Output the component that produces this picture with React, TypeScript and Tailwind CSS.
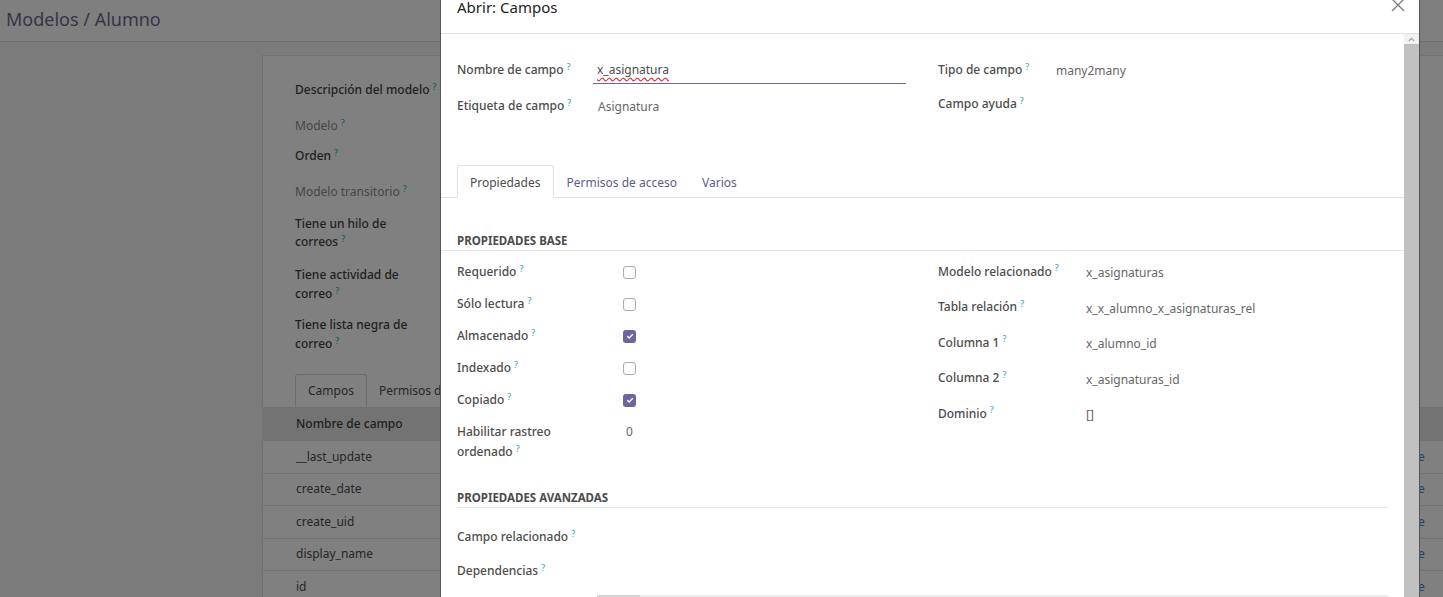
import React from "react";

const font = { fontFamily: '"Noto Sans", "Open Sans", Arial, sans-serif' };

function Q({ dim }: { dim?: boolean }) {
  return (
    <sup className={`ml-[3px] text-[9px] font-normal ${dim ? "text-[#0f5561]" : "text-[#1ea1b8]"}`}>?</sup>
  );
}

function Check({ on }: { on?: boolean }) {
  if (on) {
    return (
      <span className="flex h-[13px] w-[13px] items-center justify-center rounded-[3px] bg-[#71639e]">
        <svg width="8" height="8" viewBox="0 0 8 8">
          <path d="M1.3 4.2 L3.2 6 L6.8 2.2" stroke="white" strokeWidth="1.5" fill="none" />
        </svg>
      </span>
    );
  }
  return <span className="block h-[13px] w-[13px] rounded-[3px] border border-[#adadad] bg-white" />;
}

const bgRows = ["__last_update", "create_date", "create_uid", "display_name", "id"];

function Background() {
  return (
    <div className="absolute inset-0 flex flex-col bg-[#7b7b7b] text-[12px]">
      <div className="flex h-[42px] shrink-0 items-center border-b border-[#6e6e6e] bg-[#7f7f7f] pb-[3px] pl-[6px]">
        <span className="text-[18px] text-[#353545]">Modelos / Alumno</span>
      </div>
      <div className="ml-[262px] mt-[13px] flex-1 overflow-hidden border-l border-t border-[#727272] bg-[#808080]">
        <div className="flex flex-col pl-[32px] leading-[18px] text-[#1e1e1e]">
          <div className="mt-[25px] font-medium">Descripción del modelo<Q dim /></div>
          <div className="mt-[18px] text-[#464646]">Modelo<Q dim /></div>
          <div className="mt-[12px] font-medium">Orden<Q dim /></div>
          <div className="mt-[18px] text-[#464646]">Modelo transitorio<Q dim /></div>
          <div className="mt-[14px] font-medium leading-[18px]">Tiene un hilo de<br />correos<Q dim /></div>
          <div className="mt-[14px] font-medium leading-[19px]">Tiene actividad de<br />correo<Q dim /></div>
          <div className="mt-[12px] font-medium leading-[19px]">Tiene lista negra de<br />correo<Q dim /></div>
        </div>
        <div className="mt-[21px] flex px-[32px] text-[#262626]">
          <div className="flex h-[33px] items-center rounded-t-[3px] border border-b-0 border-[#6c6c6c] px-[12px]">Campos</div>
          <div className="flex h-[33px] items-center px-[12px]">Permisos de acceso</div>
        </div>
        <div className="flex h-[34px] items-center bg-[#737373] pl-[33px] font-medium text-[#1e1e1e]">Nombre de campo</div>
        {bgRows.map((r) => (
          <div key={r} className="flex h-[32.5px] items-center border-b border-[#727272] text-[#262626]">
            <span className="pl-[33px]">{r}</span>
            <span className="ml-auto w-[26px] pl-[1px] text-[#1e3f6a]">e</span>
          </div>
        ))}
      </div>
    </div>
  );
}

function Field({ label, w, children, h = "h-[28px]" }: { label: string; w: string; children?: React.ReactNode; h?: string }) {
  return (
    <div className={`flex ${h} items-center`}>
      <div className={`${w} shrink-0 font-medium text-[#4c4c4c]`}>
        {label}
        <Q />
      </div>
      {children}
    </div>
  );
}

function Modal() {
  return (
    <div className="absolute left-[440px] top-0 flex h-[597px] w-[980px] flex-col border-l border-r border-[#555] bg-white text-[12px]">
      <div className="flex h-[34px] shrink-0 items-start justify-between border-b border-[#dee2e6] pl-[16px] pr-[14px]">
        <span className="-mt-[3px] text-[15px] leading-[20px] text-[#222]">Abrir: Campos</span>
        <svg width="14" height="14" viewBox="0 0 14 14" className="-mt-[2px]">
          <path d="M1 1 L13 13 M13 1 L1 13" stroke="#7a7a7a" strokeWidth="1.3" />
        </svg>
      </div>
      <div className="flex flex-1 overflow-hidden">
        <div className="flex-1">
          <div className="mt-[22px] flex">
            <div className="w-[497px] shrink-0 pl-[16px]">
              <Field label="Nombre de campo" w="w-[136px]">
                <div className="flex h-[28px] w-[313px] items-center border-b border-[#71639e] pl-[4px] pt-[1px] text-[#4c4c4c]">
                  <span className="underline decoration-[#e03030] decoration-wavy underline-offset-[3px]">x_asignatura</span>
                </div>
              </Field>
              <div className="mt-[8px]">
                <Field label="Etiqueta de campo" w="w-[136px]">
                  <span className="pl-[5px] pt-[1px] text-[#666]">Asignatura</span>
                </Field>
              </div>
            </div>
            <div className="flex-1">
              <Field label="Tipo de campo" w="w-[118px]">
                <span className="pt-[1px] text-[#666]">many2many</span>
              </Field>
              <div className="mt-[6px]">
                <Field label="Campo ayuda" w="w-[118px]" />
              </div>
            </div>
          </div>

          <div className="mt-[45px] flex border-b border-[#dee2e6] px-[16px]">
            <div className="-mb-px flex h-[33px] items-center rounded-t-[3px] border border-b-white border-[#dee2e6] bg-white px-[12px] pt-[3px] text-[#4c4c4c]">Propiedades</div>
            <div className="flex h-[32px] items-center px-[13px] pt-[3px] text-[#5b5b8e]">Permisos de acceso</div>
            <div className="flex h-[32px] items-center px-[12px] pt-[3px] text-[#5b5b8e]">Varios</div>
          </div>

          <div className="mt-[35px] border-b border-[#e5e5e5] px-[16px] pb-[1px] text-[11.5px] font-bold leading-[16px] text-[#4c4c4c]">PROPIEDADES BASE</div>

          <div className="flex">
            <div className="w-[497px] shrink-0 pl-[16px] pt-[5px] leading-[20px]">
              <Field label="Requerido" w="w-[166px]" h="h-[32px]"><Check /></Field>
              <Field label="Sólo lectura" w="w-[166px]" h="h-[32px]"><Check /></Field>
              <Field label="Almacenado" w="w-[166px]" h="h-[32px]"><Check on /></Field>
              <Field label="Indexado" w="w-[166px]" h="h-[32px]"><Check /></Field>
              <Field label="Copiado" w="w-[166px]" h="h-[32px]"><Check on /></Field>
              <div className="flex py-[6px]">
                <div className="w-[166px] shrink-0 font-medium text-[#4c4c4c]">
                  Habilitar rastreo
                  <br />
                  ordenado
                  <Q />
                </div>
                <span className="pl-[3px] text-[#666]">0</span>
              </div>
            </div>
            <div className="flex-1 pt-[3px] leading-[20px]">
              <Field label="Modelo relacionado" w="w-[148px]" h="h-[35.5px]"><span className="mt-[3px] text-[#666]">x_asignaturas</span></Field>
              <Field label="Tabla relación" w="w-[148px]" h="h-[35.5px]"><span className="mt-[3px] text-[#666]">x_x_alumno_x_asignaturas_rel</span></Field>
              <Field label="Columna 1" w="w-[148px]" h="h-[35.5px]"><span className="mt-[3px] text-[#666]">x_alumno_id</span></Field>
              <Field label="Columna 2" w="w-[148px]" h="h-[35.5px]"><span className="mt-[3px] text-[#666]">x_asignaturas_id</span></Field>
              <Field label="Dominio" w="w-[148px]" h="h-[35.5px]"><span className="mt-[3px] text-[#666]">[]</span></Field>
            </div>
          </div>

          <div className="mx-[16px] mt-[22px] border-b border-[#e5e5e5] pb-[1px] text-[11.5px] font-bold leading-[16px] text-[#4c4c4c]">PROPIEDADES AVANZADAS</div>

          <div className="mt-[12px] pl-[16px]">
            <Field label="Campo relacionado" w="w-[140px]" h="h-[34px]" />
            <Field label="Dependencias" w="w-[140px]" h="h-[34px]" />
            <div className="mr-[16px] ml-[140px] flex h-[9px] items-end">
              <div className="h-[2px] w-[43px] bg-[#d4d4d4]" />
              <div className="h-[2px] flex-1 bg-[#ececec]" />
            </div>
          </div>
        </div>
        <div className="flex w-[15px] shrink-0 flex-col bg-[#c1c1c1]">
          <div className="flex h-[10px] items-center justify-center bg-[#f1f1f1]">
            <svg width="7" height="5" viewBox="0 0 7 5">
              <path d="M0.8 4 L3.5 1.3 L6.2 4" stroke="#a3a3a3" strokeWidth="1.2" fill="none" />
            </svg>
          </div>
        </div>
      </div>
    </div>
  );
}

export default function App() {
  return (
    <div className="relative h-[597px] w-[1443px] overflow-hidden" style={font}>
      <Background />
      <Modal />
    </div>
  );
}
